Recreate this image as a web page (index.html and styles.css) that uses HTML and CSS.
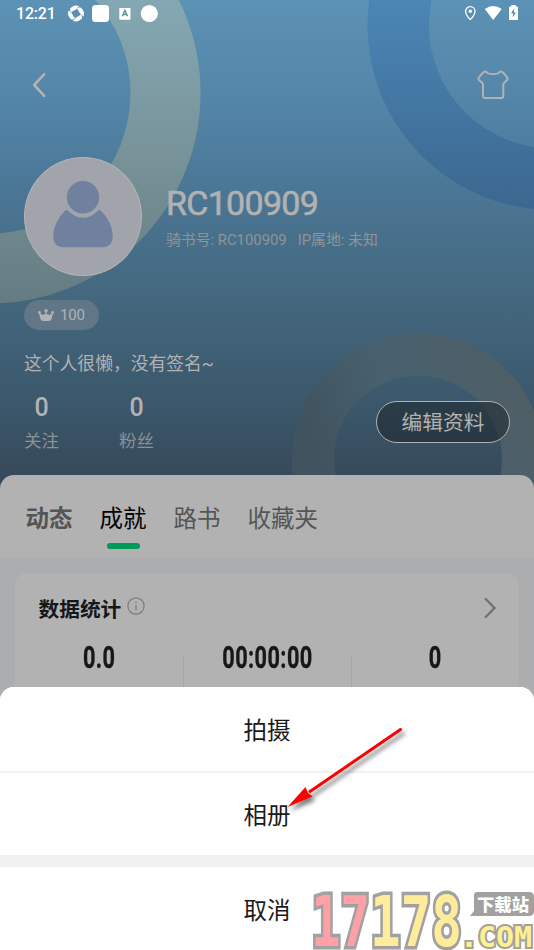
FILE: index.html
```html
<!DOCTYPE html>
<html lang="zh-CN">
<head>
<meta charset="utf-8">
<title>个人主页</title>
<link rel="stylesheet" href="styles.css">
</head>
<body>
<main class="screen">
  <section class="hero">
    <svg class="rings" width="534" height="491" viewBox="0 0 534 491" fill="none">
      <defs>
        <linearGradient id="gl" x1="0" y1="0" x2="0" y2="303" gradientUnits="userSpaceOnUse"><stop stop-color="#84a8b3"/><stop offset=".5" stop-color="#78939a"/><stop offset="1" stop-color="#657c81"/></linearGradient>
        <linearGradient id="gr" x1="0" y1="0" x2="0" y2="210" gradientUnits="userSpaceOnUse"><stop stop-color="#4b86b5"/><stop offset="1" stop-color="#3b678f"/></linearGradient>
        <linearGradient id="gb" x1="330" y1="490" x2="540" y2="420" gradientUnits="userSpaceOnUse"><stop stop-color="#40535f"/><stop offset=".4" stop-color="#48616f"/><stop offset="1" stop-color="#4e5e65"/></linearGradient>
      </defs>
      <circle cx="-10" cy="93" r="175.5" stroke="url(#gl)" stroke-width="70"/>
      <circle cx="552.4" cy="25" r="154.2" stroke="url(#gr)" stroke-width="61.5"/>
      <circle cx="418" cy="459.5" r="105" stroke="url(#gb)" stroke-width="42"/>
    </svg>

    <header class="status">
      <time class="clock">12:21</time>
      <svg class="status-left" width="100" height="20" viewBox="68 4 100 20" fill="#fff">
        <g fill="#fff" stroke="#fff" stroke-width=".8" stroke-linejoin="round">
          <path id="blade" d="M70.700 8.300Q74 4.900 78.500 6.200L75.200 9.700Q72.300 10 71.400 12.300Q69.600 10.300 70.700 8.300z"/>
          <use href="#blade" transform="rotate(90 76 13.500)"/>
          <use href="#blade" transform="rotate(180 76 13.500)"/>
          <use href="#blade" transform="rotate(270 76 13.500)"/>
        </g>
        <rect x="92" y="5" width="17" height="17" rx="3.500"/>
        <rect x="119.300" y="8" width="11.200" height="11.700" rx=".8"/>
        <path d="M122.300 16.300L124.900 10.300L127.500 16.300M123.200 14.500H126.600" fill="none" stroke="#668f9d" stroke-width="1.500"/>
        <circle cx="149.300" cy="13.500" r="8.600"/>
      </svg>
      <svg class="status-right" width="58" height="20" viewBox="462 3 58 20" fill="#fff">
        <path d="M470.300 6.700a4.700 4.700 0 0 0-4.700 4.700c0 3.200 4.700 8.200 4.700 8.200s4.700-5 4.700-8.200a4.700 4.700 0 0 0-4.700-4.700z" fill="none" stroke="#fff" stroke-width="1.300"/>
        <circle cx="470.300" cy="11.200" r="1.700"/>
        <path d="M493.200 20L484.800 8.900Q493.200 2.900 501.700 8.900z"/>
        <path d="M509 7.500Q509 6.500 510 6.500H511.300V5H515.800V6.500H517Q518 6.500 518 7.500V20H509z"/>
        <path d="M514.400 8.300L511 13.200H513.200L512.500 17.400L516 12.400H513.800z" fill="#4a86ad"/>
      </svg>
    </header>

    <nav class="topbar">
      <svg width="16" height="26" viewBox="0 0 16 26"><path d="M12.300 2.200L2.200 13L12.300 23.800" fill="none" stroke="#b2b2b2" stroke-width="2.600" stroke-linecap="round" stroke-linejoin="round"/></svg>
      <svg width="32" height="30" viewBox="0 0 32 30"><path d="M9.200 1.500C10.500 5 21.500 5 22.800 1.500Q24.500 1.200 26 2.500L30 7.200Q31.200 8.700 30 10L27 13Q26.300 13.500 26.300 14.500V26Q26.300 28 24.300 28H8Q6 28 6 26V14.500Q6 13.500 5.300 13L2 10Q.8 8.700 2 7.200L6 2.500Q7.500 1.200 9.200 1.500z" fill="none" stroke="#b2b2b2" stroke-width="2" stroke-linejoin="round"/></svg>
    </nav>

    <div class="profile">
      <div class="avatar">
        <svg width="60" height="67" viewBox="0 0 60 67" fill="#70819f"><circle cx="30" cy="16.300" r="16.200"/><path d="M14.500 29.200Q30 44.500 45.500 29.200Q47 28.800 48.500 30.300Q59.700 42 59.700 55Q59.700 66.200 49 66.200H11Q.3 66.200 .3 55Q.3 42 11.500 30.300Q13 28.800 14.500 29.200z"/></svg>
      </div>
      <div class="identity">
        <h1 class="name">RC100909</h1>
        <p class="meta"><span>骑书号: RC100909</span><span>IP属地: 未知</span></p>
      </div>
    </div>

    <div class="badge">
      <svg width="16" height="12" viewBox="0 0 16 12" fill="#b2b2b2"><path d="M.9 3.500L4.500 6L7.400 5V2H8.600V5L11.500 6L15.100 3.500L13.700 9.500Q13.200 12 10.500 12H5.500Q2.800 12 2.300 9.500z"/><circle cx="8" cy="1.700" r="1.700"/><circle cx="1.500" cy="3.500" r="1.400"/><circle cx="14.500" cy="3.500" r="1.400"/></svg>
      <span>100</span>
    </div>
    <p class="bio">这个人很懒，没有签名~</p>

    <div class="social">
      <div class="count"><b>0</b><span>关注</span></div>
      <div class="count"><b>0</b><span>粉丝</span></div>
      <button class="edit">编辑资料</button>
    </div>
  </section>

  <nav class="tabs">
    <span class="tab strong">动态</span>
    <span class="tab active">成就</span>
    <span class="tab">路书</span>
    <span class="tab">收藏夹</span>
  </nav>

  <section class="content">
    <article class="card">
      <div class="card-head">
        <h2>数据统计</h2>
        <svg width="18" height="18" viewBox="0 0 18 18" fill="none" stroke="#7c7c7c"><circle cx="9" cy="9" r="8.100" stroke-width="1.200"/><path d="M9 7.700V13.300M9 4.800V6.200" stroke-width="1.200"/></svg>
        <svg class="more" width="14" height="22" viewBox="0 0 14 22"><path d="M2 1.300L11.500 11L2 20.700" fill="none" stroke="#6e6e6e" stroke-width="2.200"/></svg>
      </div>
      <div class="stats">
        <div class="stat"><span>0.0</span></div>
        <div class="stat"><span>00:00:00</span></div>
        <div class="stat"><span>0</span></div>
      </div>
    </article>
  </section>

  <section class="sheet">
    <button class="option">拍摄</button>
    <button class="option second">相册</button>
    <button class="option cancel">取消</button>
  </section>

  <svg class="arrow" width="130" height="96" viewBox="282 722 130 96">
    <path d="M400.500 729.500L310 791.500" stroke="#f00" stroke-width="3" stroke-linecap="round"/>
    <path d="M287.500 807L305.500 787L308 793L312.500 796.500z" fill="#f00"/>
  </svg>

  <svg class="watermark" width="226" height="64" viewBox="308 886 226 64">
    <g class="digits" font-size="70">
      <text class="pink" x="311" y="945.500" textLength="59" lengthAdjust="spacingAndGlyphs">17</text>
      <text class="yellow" x="370" y="945.500" textLength="92" lengthAdjust="spacingAndGlyphs">178</text>
    </g>
    <path d="M477 892H529Q534 892 534 897V911Q534 916 529 916H470L474 911V896Q474 892 477 892z" fill="#a1a1a1"/>
    <text class="site" x="477" y="910.500" textLength="52" lengthAdjust="spacingAndGlyphs">下载站</text>
    <text class="com" x="460" y="947" textLength="72" lengthAdjust="spacingAndGlyphs">.COM</text>
  </svg>
</main>
</body>
</html>
```
FILE: styles.css
```css
* { box-sizing: border-box; }
body { margin: 0; font-family: Roboto, "Noto Sans CJK SC", sans-serif; background: #adaeb0; }
h1, h2, p { margin: 0; font-weight: 400; }
button { font: inherit; padding: 0; cursor: pointer; }
svg { display: block; flex: none; }
.screen { position: relative; width: 534px; height: 950px; overflow: hidden; }

.hero {
  position: relative;
  height: 491px;
  padding: 0 24px;
  color: #b2b2b2;
  background: linear-gradient(176deg, #374a5b 0%, #5c92b5 0%);
  background: linear-gradient(to bottom, #5c92b5 0%, #5385a8 21%, #4b7796 38%, #44687f 60%, #3c596d 80%, #374a5b 97%);
}
.rings { position: absolute; left: 0; top: 0; }
.hero > *:not(.rings) { position: relative; }

.status { display: flex; align-items: flex-start; height: 30px; margin: 0 -8px; color: #fff; }
.clock { width: 52px; padding-top: 4px; font-size: 16px; font-weight: 500; line-height: 20px; letter-spacing: -.2px; }
.status-left { margin-top: 4px; }
.status-right { margin: 3px -2px 0 auto; }

.topbar { display: flex; justify-content: space-between; align-items: center; height: 110px; margin-right: 1px; padding: 0 0 1px 8px; }

.profile { display: flex; align-items: center; gap: 24px; padding-top: 17px; }
.avatar { display: flex; justify-content: center; width: 118px; height: 119px; padding-top: 23px; border: 1.500px solid #b5b3b4; border-radius: 50%; background: #a1a4aa; }
.name { font-size: 34px; line-height: 40px; font-weight: 400; letter-spacing: -.7px; -webkit-text-stroke: .6px #b2b2b2; }
.meta { display: flex; gap: 11px; margin-top: 6px; font-size: 14.850px; line-height: 22px; color: #8f9497; }

.badge { display: flex; align-items: center; gap: 6px; width: 75px; height: 30px; margin-top: 24px; padding-left: 14px; border-radius: 15px; background: #617787; font-size: 15px; letter-spacing: -.2px; }
.bio { margin-top: 21px; font-size: 17.800px; line-height: 25px; }

.social { display: flex; margin-top: 18px; }
.count { display: flex; flex-direction: column; width: 95px; }
.count b { width: 35px; text-align: center; font-size: 25px; line-height: 28px; font-weight: 500; }
.count span { margin-top: 7px; font-size: 17.500px; line-height: 25px; color: #8c9194; }
.edit { width: 134px; height: 42px; margin: 7px 0 0 auto; padding-top: 1px; border: 1.500px solid #b2b2b2; border-radius: 21px; background: rgba(25, 33, 38, .5); color: #b2b2b2; font-size: 20.700px; line-height: 40px; }

.tabs { position: relative; display: flex; gap: 27px; height: 83px; margin-top: -16px; padding: 25px 25.500px 0; border-radius: 14px 14px 0 0; background: #b2b2b2; }
.tab { font-size: 23.500px; line-height: 38px; color: #555; }
.strong { font-weight: 700; }
.active { color: #050505; }
.active::after { content: ""; display: block; width: 33px; height: 6px; margin: 5px auto 0; border-radius: 3px; background: #009a59; }

.content { padding: 15px 15px 0; background: #acadaf; }
.card { height: 160px; border-radius: 12px; background: #b2b2b2; }
.card-head { display: flex; align-items: center; height: 68px; padding: 2px 22px 0 23.500px; }
.card-head h2 { margin-right: 6px; font-size: 20.700px; font-weight: 700; color: #151719; }
.card-head > svg:not(.more) { margin-bottom: 5px; }
.more { margin-left: auto; }
.stats { display: grid; grid-template-columns: repeat(3, 1fr); }
.stat { display: flex; justify-content: center; height: 80px; }
.stat span { height: 34px; color: #151719; font-size: 31px; line-height: 34px; font-weight: 700; letter-spacing: .6px; transform: scaleX(.7); -webkit-text-stroke: .4px #151719; }
.stat + .stat { background: linear-gradient(#a5a5a5, #a5a5a5) 0 14px / 1px 60px no-repeat; }

.sheet { position: absolute; left: 0; right: 0; bottom: 0; height: 263px; border-radius: 14px 14px 0 0; background: #fff; overflow: hidden; }
.option { display: block; width: 100%; height: 84px; padding-top: 2px; border: 0; background: #fff; color: #1b1b1b; font-size: 23.500px; line-height: 84px; }
.second { padding-top: 1px; border-top: 2px solid #f2f2f2; }
.cancel { height: 95px; border-top: 12px solid #f1f1f1; }

.arrow { position: absolute; left: 282px; top: 722px; filter: drop-shadow(3px 4px 2px rgba(0, 0, 0, .5)); }
.watermark { position: absolute; right: 0; bottom: 0; }
.digits, .com { font-family: "DejaVu Sans Mono", monospace; font-weight: 700; stroke: #a1a1a1; stroke-width: 7px; paint-order: stroke; }
.pink { fill: #ff9fa6; }
.yellow { fill: #ffec9b; }
.com { fill: #fff08f; font-size: 28px; stroke-width: 4px; }
.site { fill: #fff; font-family: "Noto Sans CJK SC", sans-serif; font-size: 17px; font-weight: 900; }
```
